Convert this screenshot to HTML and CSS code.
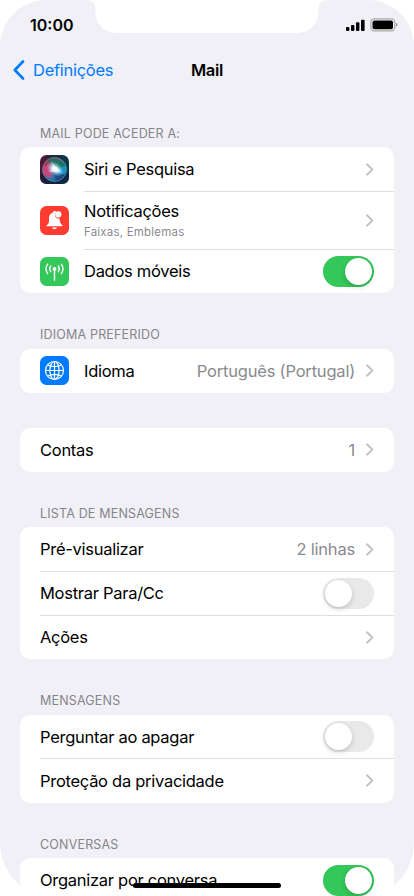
FILE: index.html
```
<!DOCTYPE html>
<html lang="pt">
<head>
<meta charset="utf-8">
<title>Mail</title>
<link rel="stylesheet" href="styles.css">
</head>
<body>
<svg class="defs" width="0" height="0"><symbol id="chev" viewBox="0 0 8 13"><path d="M1 1.300 6.300 6.500 1 11.700" fill="none" stroke="#c2c2c5" stroke-width="1.9" stroke-linecap="round" stroke-linejoin="round"/></symbol></svg>
<div class="phone">
  <svg class="notch" width="244" height="34" viewBox="0 0 244 34"><path d="M0 0C7 0 10.500 3 10.500 10V11C10.500 24 19 33 33 33H211C225 33 233.500 24 233.500 11V10C233.500 3 237 0 244 0Z" fill="#fff"/></svg>
  <header class="status">
    <span class="time">10:00</span>
    <span class="indicators">
      <svg width="19" height="12" viewBox="0 0 19 12"><rect x="0" y="8" width="3.400" height="4" rx="1"/><rect x="5" y="6" width="3.400" height="6" rx="1"/><rect x="10" y="3.300" width="3.400" height="8.700" rx="1"/><rect x="15" y="0.700" width="3.600" height="11.300" rx="1"/></svg>
      <svg width="28" height="14" viewBox="0 0 28 14"><rect x=".8" y=".8" width="24" height="12" rx="3.600" fill="none" stroke="#a9a9ac" stroke-width="1.200"/><rect x="2.500" y="2.500" width="20.500" height="8.700" rx="2"/><path d="M25.900 4.700Q27.500 5.300 27.500 6.800T25.900 8.900Z" fill="#a0a0a3"/></svg>
    </span>
  </header>
  <nav class="nav">
    <a class="back"><svg width="12" height="20" viewBox="0 0 12 20"><path d="M10 1.500 1.800 10 10 18.500" fill="none" stroke="#007aff" stroke-width="2.600" stroke-linecap="round" stroke-linejoin="round"/></svg><span>Definições</span></a>
    <h1>Mail</h1>
  </nav>
  <main>
    <h2>MAIL PODE ACEDER A:</h2>
    <section class="card icons">
      <div class="row">
        <svg class="icon" viewBox="0 0 29 29">
          <defs>
            <linearGradient id="sb" x2="1" y2=".3"><stop stop-color="#64113a"/><stop offset=".45" stop-color="#172b3c"/><stop offset="1" stop-color="#073c4b"/></linearGradient>
            <linearGradient id="so" x2="1" y2="1"><stop stop-color="#76364e"/><stop offset=".35" stop-color="#b93d6c"/><stop offset=".6" stop-color="#267fae"/><stop offset="1" stop-color="#075084"/></linearGradient>
            <radialGradient id="sg"><stop stop-color="#fff"/><stop offset=".3" stop-color="#f0fbff" stop-opacity=".95"/><stop offset="1" stop-color="#7bd6ee" stop-opacity="0"/></radialGradient>
          </defs>
          <rect width="29" height="29" rx="6.500" fill="url(#sb)"/>
          <path d="M0 18H29V22.500Q29 29 22.500 29H6.500Q0 29 0 22.500Z" fill="#151540" opacity=".5"/>
          <circle cx="14.500" cy="14.500" r="12" fill="url(#so)"/>
          <path d="M8 5C14 1 24 4 26 13L15 14Z" fill="#19735f" opacity=".9"/>
          <path d="M3 12Q8 8 15 14.500L11 23Q2 22 3 12Z" fill="#d5447f" opacity=".75"/>
          <path d="M15 14.500 26 11Q27 20 21 19Z" fill="#169bd2" opacity=".85"/>
          <path d="M12 17Q18 24 14 26Q22 26 24 20Z" fill="#253b79" opacity=".75"/>
          <ellipse cx="15" cy="14" rx="9.500" ry="6.500" transform="rotate(35 15 14)" fill="url(#sg)"/>
          <path d="M11 6 16 12 22 17 15 16.500 8 17 13 13Z" fill="#fff" opacity=".45"/>
          <circle cx="14.500" cy="14.500" r="12" fill="none" stroke="#6aa8a5" stroke-width=".8" opacity=".7"/>
        </svg>
        <span class="label">Siri e Pesquisa</span><svg class="chev"><use href="#chev"/></svg>
      </div>
      <div class="row tall">
        <svg class="icon" viewBox="0 0 29 29"><rect width="29" height="29" rx="6.500" fill="#ff3b30"/><path d="M6.300 20.300C6.300 18.900 9 18.500 9 15V12.500C9 8.700 11 7.100 13 6.500C13.200 5 14 4.800 15 4.900C16 5 16.200 5.400 16.500 6C14 8 14.500 12.200 18.500 12.500C19.800 12.500 19.900 14.500 20.100 16C20.400 18.500 22.700 18.800 22.700 20.300Z" fill="#fff"/><circle cx="18.300" cy="8.400" r="3.100" fill="#fff"/><path d="M12 21.500H17Q16.500 23.300 14.500 23.300T12 21.500Z" fill="#fff"/></svg>
        <span class="label stack"><span>Notificações</span><small>Faixas, Emblemas</small></span><svg class="chev"><use href="#chev"/></svg>
      </div>
      <div class="row">
        <svg class="icon" viewBox="0 0 29 29"><rect width="29" height="29" rx="6.500" fill="#34c759"/><circle cx="14.500" cy="12" r="2" fill="#fff"/><g fill="none" stroke="#fff" stroke-width="1.400" stroke-linecap="round"><path d="M14.500 12V23.300M10.800 9Q8.600 11.900 10.800 14.800M18.200 9Q20.400 11.900 18.200 14.800M7.700 7.200Q4.300 11.900 7.700 16.600M21.300 7.200Q24.700 11.900 21.300 16.600"/></g></svg>
        <span class="label">Dados móveis</span><span class="switch on"></span>
      </div>
    </section>

    <h2>IDIOMA PREFERIDO</h2>
    <section class="card icons">
      <div class="row">
        <svg class="icon" viewBox="0 0 29 29"><rect width="29" height="29" rx="6.500" fill="#007aff"/><g fill="none" stroke="#fff" stroke-width="1.200"><circle cx="14.500" cy="14.500" r="9"/><ellipse cx="14.500" cy="14.500" rx="4.600" ry="9"/><path d="M14.500 5.500V23.500M5.500 14.500H23.500M7.500 9Q14.500 12.200 21.500 9M7.500 20Q14.500 16.800 21.500 20"/></g></svg>
        <span class="label">Idioma</span><span class="value">Português (Portugal)</span><svg class="chev"><use href="#chev"/></svg>
      </div>
    </section>

    <section class="card alone">
      <div class="row"><span class="label">Contas</span><span class="value">1</span><svg class="chev"><use href="#chev"/></svg></div>
    </section>

    <h2>LISTA DE MENSAGENS</h2>
    <section class="card">
      <div class="row"><span class="label">Pré-visualizar</span><span class="value">2 linhas</span><svg class="chev"><use href="#chev"/></svg></div>
      <div class="row"><span class="label">Mostrar Para/Cc</span><span class="switch"></span></div>
      <div class="row"><span class="label">Ações</span><svg class="chev"><use href="#chev"/></svg></div>
    </section>

    <h2>MENSAGENS</h2>
    <section class="card">
      <div class="row"><span class="label">Perguntar ao apagar</span><span class="switch"></span></div>
      <div class="row"><span class="label">Proteção da privacidade</span><svg class="chev"><use href="#chev"/></svg></div>
    </section>

    <h2>CONVERSAS</h2>
    <section class="card">
      <div class="row"><span class="label">Organizar por conversa</span><span class="switch on"></span></div>
    </section>
  </main>
  <div class="home"></div>
</div>
</body>
</html>
```
FILE: styles.css
```
* { box-sizing: border-box; }
html, body { margin: 0; background: #fff; overflow: hidden; }
body { font: 400 16.5px/20px Inter, "Liberation Sans", sans-serif; color: #000; letter-spacing: -0.28px; }
.defs { position: absolute; }
.phone { position: relative; width: 414px; height: 896px; overflow: hidden; background: #f1f0f6; border-radius: 46px 46px 50px 50px / 46px 46px 54px 54px; }
.notch { position: absolute; left: 85px; top: 0; }
.status { display: flex; justify-content: space-between; align-items: center; height: 50px; padding: 0 16px 0 30px; }
.time { font-weight: 600; font-size: 16px; letter-spacing: 0; }
.indicators { display: flex; gap: 5px; align-items: center; }
.nav { display: grid; grid-template-columns: 1fr auto 1fr; align-items: center; height: 40px; padding: 0 13px; }
.back { display: flex; align-items: center; gap: 8px; color: #007aff; }
h1 { margin: 0; font-size: 16.5px; line-height: 20px; font-weight: 600; }
main { padding: 33.8px 20px 0; }
h2 { margin: 0; height: 55.5px; padding: 33px 20px 0; font-size: 12.5px; line-height: 18px; font-weight: 400; color: #85858a; letter-spacing: .18px; white-space: nowrap; }
main > h2:first-child { height: 23.5px; padding-top: 1px; }
.card { background: #fff; border-radius: 10px; }
.alone { margin-top: 35px; }
.row { position: relative; display: flex; align-items: center; height: 44px; padding: 0 20px; white-space: nowrap; }
.tall { height: 58px; }
.row + .row::before { content: ""; position: absolute; top: -0.500px; left: 20px; right: 0; height: 1px; background: #dededf; }
.icons .row + .row::before { left: 64px; }
.icon { width: 29px; height: 29px; margin-right: 15px; }
.label { flex: 1; }
.stack { display: flex; flex-direction: column; }
small { font-size: 11.5px; line-height: 16px; margin-top: 3px; color: #8a8a8e; letter-spacing: .2px; }
.value { color: #8a8a8e; margin-right: 11px; letter-spacing: -0.2px; }
.chev { width: 8px; height: 13px; }
.switch { width: 51px; height: 31px; border-radius: 16px; background: #e9e9ea; padding: 2px; display: flex; }
.switch::after { content: ""; width: 27px; height: 27px; border-radius: 50%; background: #fff; box-shadow: 0 2px 5px rgba(0,0,0,.18); }
.on { background: #34c759; justify-content: flex-end; }
.home { position: absolute; left: 133px; top: 883px; width: 148px; height: 5px; border-radius: 3px; background: #000; }
```
